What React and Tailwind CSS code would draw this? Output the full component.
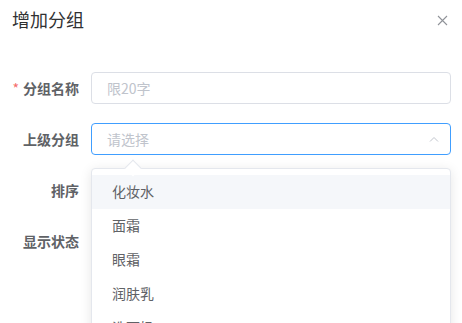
import React from "react";

const font = { fontFamily: '"Noto Sans CJK SC", "Noto Sans", sans-serif' };

function Label({ children, required }) {
  return (
    <div className="w-[80px] shrink-0 pr-3 flex items-center justify-end text-sm font-bold text-[#606266]">
      {required && <span className="text-[#F56C6C] mr-1 font-normal">*</span>}
      {children}
    </div>
  );
}

export default function App() {
  const options = ["化妆水", "面霜", "眼霜", "润肤乳", "洗面奶", "精华液"];
  return (
    <div className="w-[462px] h-[323px] overflow-hidden bg-white relative" style={font}>
      {/* 标题 */}
      <div className="flex items-center justify-between pl-3 pr-3 pt-[5px] h-[32px]">
        <span className="text-[18px] leading-6 text-[#303133]">增加分组</span>
        <svg width="11" height="11" viewBox="0 0 11 11" className="mr-[2px] mt-[3px]">
          <path d="M1 1 L10 10 M10 1 L1 10" stroke="#909399" strokeWidth="1.1" fill="none" />
        </svg>
      </div>

      {/* 表单 */}
      <div className="pl-[11px] pr-[11px] pt-[40px] flex flex-col gap-[19px]">
        <div className="flex h-[32px]">
          <Label required>分组名称</Label>
          <div className="flex-1 border border-[#DCDFE6] rounded flex items-center px-[15px] text-sm text-[#C0C4CC]">
            限20字
          </div>
        </div>

        <div className="flex h-[32px] relative">
          <Label>上级分组</Label>
          <div className="flex-1 border border-[#409EFF] rounded flex items-center justify-between pl-[15px] pr-[11px] text-sm text-[#C0C4CC]">
            <span>请选择</span>
            <svg width="10" height="6" viewBox="0 0 10 6">
              <path d="M1 5.5 L5 1.5 L9 5.5" stroke="#C0C4CC" strokeWidth="1" fill="none" />
            </svg>
          </div>

          {/* 下拉 */}
          <div className="absolute left-[80px] right-0 top-[45px] z-10">
            <div className="absolute -top-[6px] left-[36px] w-3 h-3 rotate-45 bg-white border-l border-t border-[#E4E7ED]" />
            <div className="bg-white border border-[#E4E7ED] rounded shadow-[0_2px_12px_0_rgba(0,0,0,0.1)] pt-[6px] pb-[6px]">
              {options.map((o, i) => (
                <div
                  key={o}
                  className={`h-[34px] flex items-center px-5 pb-[2px] text-sm text-[#606266] ${i === 0 ? "bg-[#F5F7FA]" : ""}`}
                >
                  {o}
                </div>
              ))}
            </div>
          </div>
        </div>

        <div className="flex h-[32px]">
          <Label>排序</Label>
          <div className="flex-1" />
        </div>

        <div className="flex h-[32px]">
          <Label>显示状态</Label>
          <div className="flex-1" />
        </div>
      </div>
    </div>
  );
}
